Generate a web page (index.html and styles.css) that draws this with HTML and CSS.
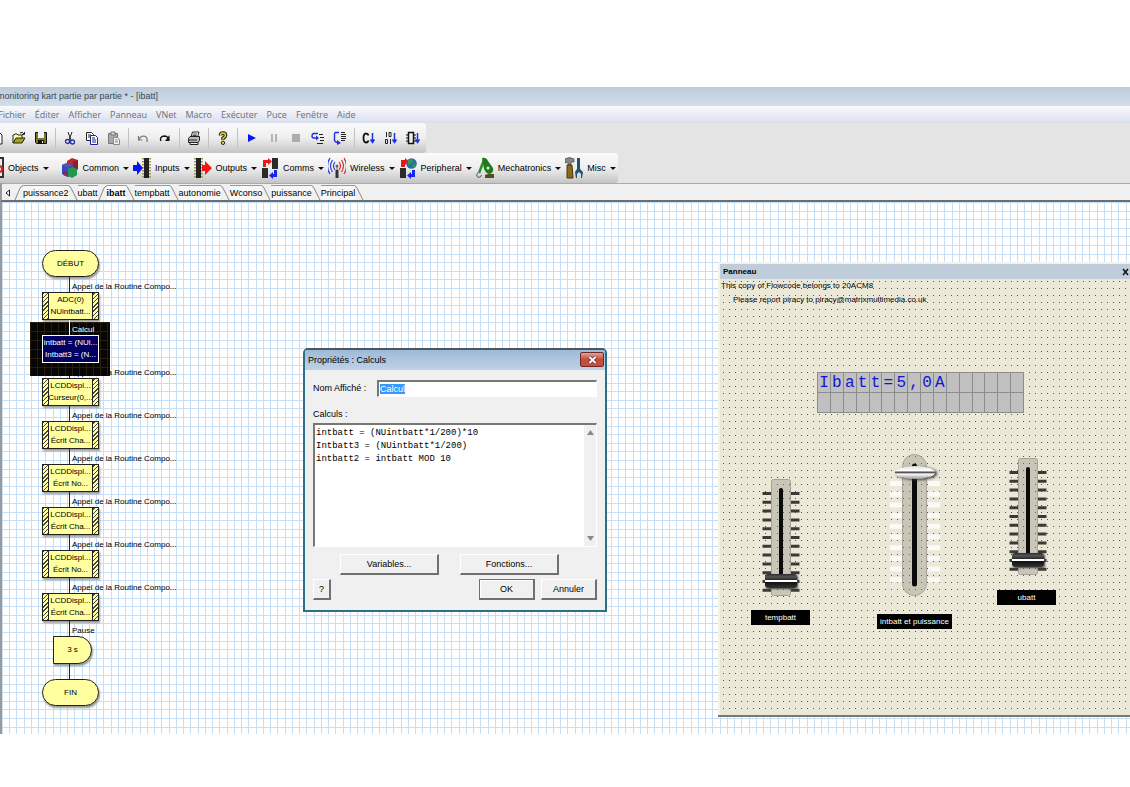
FILE: index.html
```
<!DOCTYPE html>
<html lang="fr">

<head>
    <meta charset="UTF-8">
    <meta name="viewport" content="width=device-width, initial-scale=1.0">
    <title>monitoring kart partie par partie * - [ibatt]</title>
    <link rel="stylesheet" href="styles.css">
</head>

<body>
    <header class="title-bar">monitoring kart partie par partie * - [ibatt]</header>

    <nav class="menu-bar">
        <button>Fichier</button>
        <button>Éditer</button>
        <button>Afficher</button>
        <button>Panneau</button>
        <button>VNet</button>
        <button>Macro</button>
        <button>Exécuter</button>
        <button>Puce</button>
        <button>Fenêtre</button>
        <button>Aide</button>
    </nav>

    <div class="toolbars">
        <div class="toolbar">
            <button aria-label="Nouveau"><svg width="14" height="14" viewBox="0 0 14 14"><path d="M3 1h6l3 3v9H3z" fill="#fff" stroke="#222"/></svg></button>
            <button aria-label="Ouvrir"><svg width="14" height="14" viewBox="0 0 14 14"><path d="M1 12V4h1l1-1h2l1 1h4v3" fill="#ffffa0" stroke="#222"/><path d="M1 12l3-5h9l-3 5z" fill="#a5a51c" stroke="#222"/><path d="M8 2q2-2 4 1M12.500 1v2.500H10" fill="none" stroke="#222"/></svg></button>
            <button aria-label="Enregistrer"><svg width="14" height="14" viewBox="0 0 14 14"><path d="M1.500 1.500h11v11h-10l-1-1z" fill="#77772a" stroke="#111"/><path d="M4 1h6v6H4z" fill="#f4f4f4"/><path d="M4 9h6v4H4z" fill="#111"/><path d="M8 10h1v2H8z" fill="#fff"/></svg></button>
            <span class="sep"></span>
            <button aria-label="Couper"><svg width="14" height="14" viewBox="0 0 14 14"><path d="M5 1l3 8M9 1L6 9" stroke="#222" fill="none"/><circle cx="4.500" cy="10.500" r="2" fill="none" stroke="#2430a8" stroke-width="1.300"/><circle cx="9.500" cy="11" r="2" fill="none" stroke="#2430a8" stroke-width="1.300"/></svg></button>
            <button aria-label="Copier"><svg width="14" height="14" viewBox="0 0 14 14"><path d="M1.500 1.500h5l2 2v6h-7z" fill="#fff" stroke="#222"/><path d="M3 4h3M3 6h4" stroke="#222"/><path d="M5.500 4.500h5l2 2v7h-7z" fill="#fff" stroke="#1c2590"/><path d="M7 7h3M7 9h4M7 11h4" stroke="#1c2590"/></svg></button>
            <button aria-label="Coller"><svg width="14" height="14" viewBox="0 0 14 14"><path d="M1.500 2.500h9v10h-9z" fill="#a8a8a8" stroke="#777"/><path d="M4 1h4v3H4z" fill="#ddd" stroke="#777"/><path d="M6.500 6.500h4l2 2v5h-6z" fill="#f4f4f4" stroke="#888"/><path d="M8 9h3M8 11h3" stroke="#888"/></svg></button>
            <span class="sep"></span>
            <button aria-label="Annuler"><svg width="12" height="14" viewBox="0 0 12 14"><path d="M1.500 5v4h4M2 9q1-4 5-4q4 1 3 6" fill="none" stroke="#777" stroke-width="1.200"/></svg></button>
            <button aria-label="Rétablir"><svg width="12" height="14" viewBox="0 0 12 14"><path d="M2 10q-2-4 3-5q4 0 5 4" fill="none" stroke="#111" stroke-width="1.400"/><path d="M10.500 4v6H6z" fill="#111"/></svg></button>
            <span class="sep"></span>
            <button aria-label="Imprimer"><svg width="14" height="14" viewBox="0 0 14 14"><path d="M4 6l1.500-5H12l-1.500 5" fill="#fff" stroke="#222"/><path d="M6 3h4M5.500 4.500h4" stroke="#444"/><path d="M1.500 7.500l1.500-2h9.500v4l-1.500 2h-9.500z" fill="#bbb" stroke="#222"/><path d="M3 11.500h8v2H3zM2 9h8" fill="#eee" stroke="#222"/></svg></button>
            <span class="sep"></span>
            <button aria-label="Aide"><svg width="10" height="14" viewBox="0 0 10 14"><path d="M2.500 4.500q0-2.500 2.500-2.500t2.500 2.300q0 1.500-2.500 3v1.500" fill="none" stroke="#222" stroke-width="3.600"/><path d="M2.500 4.500q0-2.500 2.500-2.500t2.500 2.300q0 1.500-2.500 3v1" fill="none" stroke="#e6dc28" stroke-width="1.500"/><circle cx="5" cy="11.800" r="1.700" fill="#e6dc28" stroke="#222"/></svg></button>
            <span class="sep"></span>
            <button aria-label="Exécuter"><svg width="10" height="12" viewBox="0 0 10 12"><path d="M1 2l8 4-8 4z" fill="#0a18f0"/></svg></button>
            <button aria-label="Pause"><svg width="8" height="12" viewBox="0 0 8 12"><path d="M1 2h2v8H1zM5 2h2v8H5z" fill="#b4b4b4"/></svg></button>
            <button aria-label="Stop"><svg width="8" height="12" viewBox="0 0 8 12"><path d="M0 2h8v8H0z" fill="#acacac"/></svg></button>
            <button aria-label="Pas à pas entrant"><svg width="14" height="14" viewBox="0 0 14 14"><path d="M7 2.500H2.500Q1 3 1 5t2 2h2" fill="none" stroke="#2030e0" stroke-width="1.400"/><path d="M5 4.500L8 7 5 9.500z" fill="#2030e0"/><path d="M8 3.500h4M9 6.500h4M9 9.500h4M6 12.500h6" stroke="#222"/></svg></button>
            <button aria-label="Pas à pas principal"><svg width="14" height="14" viewBox="0 0 14 14"><path d="M6 1.500H2.500Q1.500 2 1.500 3v6q0 2 3 2.500" fill="none" stroke="#2030e0" stroke-width="1.400"/><path d="M4 9l4 3-4 2z" fill="#2030e0"/><path d="M8 1.500h4M8 3.500h5M8 5.500h5M8 7.500h5M8 9.500h4" stroke="#222"/></svg></button>
            <span class="sep"></span>
            <button aria-label="Compiler en C"><svg width="14" height="14" viewBox="0 0 14 14"><path d="M6.500 4.500Q6 2.500 4 2.500 1.500 2.500 1.500 7T4 11.500q2 0 2.500-2" fill="none" stroke="#111" stroke-width="1.800"/><path d="M10.500 2v9M8.500 8.500l2 3 2-3" fill="none" stroke="#2030e0" stroke-width="1.500"/></svg></button>
            <button aria-label="Compiler en hexadécimal"><svg width="14" height="14" viewBox="0 0 14 14"><path d="M2.500 1v5M6.500 8v5M1.500 8.500h2v4h-2zM5 1.500h2v4H5z" fill="none" stroke="#222"/><path d="M10.500 2v9M8.500 8.500l2 3 2-3" fill="none" stroke="#2030e0" stroke-width="1.500"/></svg></button>
            <button aria-label="Compiler vers la puce"><svg width="14" height="14" viewBox="0 0 14 14"><path d="M2.500 1.500h5v11h-5z" fill="#eee" stroke="#111" stroke-width="1.500"/><path d="M0 4h2M0 7h2M0 10h2M8 4h2M8 7h2M8 10h2" stroke="#111"/><path d="M11.500 2v9M9.500 8.500l2 3 2-3" fill="none" stroke="#2030e0" stroke-width="1.500"/></svg></button>
        </div>

        <div class="toolbar components">
            <button><svg width="18" height="22" viewBox="0 0 18 22"><path d="M1 1h16v19H1z" fill="#eee" stroke="#333" stroke-width="2"/><circle cx="13" cy="12" r="3" fill="none" stroke="#d22" stroke-width="2"/></svg><span>Objects</span></button>
            <button><svg width="18" height="22" viewBox="0 0 18 22"><path d="M6 4l5-3 6 2v9l-5 3-6-2z" fill="#b52d2d"/><path d="M12 5l5-2v9l-5 3z" fill="#8c1f28"/><path d="M1 8l5-2 6 2v9l-5 3-6-3z" fill="#2e4fc4"/><path d="M1 8l5-2 6 2-5 3z" fill="#5b4fb0"/><path d="M7 12l5-2 4 2v6l-5 3-4-2z" fill="#1f9a4a"/><path d="M2 13l5 2v5l-5-2z" fill="#7a2d6a"/></svg><span>Common</span></button>
            <button><svg width="18" height="22" viewBox="0 0 18 22"><path d="M10 1v20M17 1v20" fill="none" stroke="#a89a4a" stroke-width="2" stroke-dasharray="1.500 1.500"/><path d="M11 1h5v20h-5z" fill="#222"/><path d="M0 8h4V4l6 7-6 7v-4H0z" fill="#0c14f5"/></svg><span>Inputs</span></button>
            <button><svg width="18" height="22" viewBox="0 0 18 22"><path d="M1 1v20M8 1v20" fill="none" stroke="#a89a4a" stroke-width="2" stroke-dasharray="1.500 1.500"/><path d="M2 1h5v20H2z" fill="#222"/><path d="M8 8h3V4l7 7-7 7v-4H8z" fill="#f81414"/></svg><span>Outputs</span></button>
            <button><svg width="18" height="22" viewBox="0 0 18 22"><path d="M11 1h6v11h-6zM1 11h6v10H1z" fill="#2b2b2b"/><path d="M2 10V3h5V1l4 3.500L7 8V6H5v4z" fill="#f11414"/><path d="M16 13v7h-4v2l-4-3.500L12 15v2h1v-4z" fill="#1428e8"/></svg><span>Comms</span></button>
            <button><svg width="18" height="22" viewBox="1 0 18 22"><g fill="none" stroke="#2a3fd0" stroke-width="1.200"><path d="M8 5q-3 4 0 8M5.500 3q-4 6 0 12M3 1q-5 8 0 16"/></g><g fill="none" stroke="#e02828" stroke-width="1.200"><path d="M12 5q3 4 0 8M14.500 3q4 6 0 12M17 1q5 8 0 16"/></g><circle cx="10" cy="9" r="1.500" fill="#666"/><path d="M9.500 9h1v6h-1z" fill="#666"/><path d="M8.500 13h3v8h-3z" fill="#333"/></svg><span>Wireless</span></button>
            <button><svg width="18" height="22" viewBox="0 0 18 22"><path d="M1 11h6v10H1z" fill="#2b2b2b"/><path d="M2 10V3h4V1l4 3.500L6 8v2z" fill="#f11414"/><circle cx="12.500" cy="6.500" r="5.300" fill="#2c6ab0"/><path d="M9 3l4-1 1 3-3 2-2 1zM13 8l4-2-1 4-2 1z" fill="#2f9a50"/><path d="M16 13v7h-4v2l-4-3.500L12 15v2h1v-4z" fill="#1428e8"/></svg><span>Peripheral</span></button>
            <button><svg width="18" height="22" viewBox="0 0 18 22"><path d="M3 16L8 3" stroke="#2b8c2b" stroke-width="2.500"/><path d="M6 1q4-1 6 3l5 7q1 4-3 6-4 0-6-5z" fill="#1d7c1d"/><circle cx="12" cy="11" r="1.500" fill="#d8efd8"/><circle cx="3" cy="18" r="2.300" fill="none" stroke="#555" stroke-dasharray="9 4"/><path d="M9 21v-3l3-1h6v4z" fill="#5a4a20"/></svg><span>Mechatronics</span></button>
            <button><svg width="18" height="22" viewBox="0 0 18 22"><path d="M0 2q4-3 9 0v3H6v3H3V5L0 6z" fill="#8a8a8a" stroke="#444" stroke-width=".7"/><path d="M2 8h5l1 13H2z" fill="#8a6a1c" stroke="#4a3808"/><path d="M12 1h3v11l3 3-1 6h-1v-4l-2-2-2 2v4h-1l-1-6 2-3z" fill="#1d5572"/></svg><span>Misc</span></button>
        </div>
    </div>

    <nav class="tabs">
        <button class="tab-scroll" aria-label="Précédent"><svg width="5" height="8" viewBox="0 0 5 8"><path d="M4.500 1L1 4l3.500 3z" fill="#fff" stroke="#222"/></svg></button>
        <svg class="edge" width="9" height="15" viewBox="0 0 9 15"><path d="M1 15L6 3q1-2 3-2" /></svg>
        <button>puissance2</button>
        <svg class="edge" width="9" height="15" viewBox="0 0 9 15"><path d="M0 1q1 0 2 2l6 12" /></svg>
        <button>ubatt</button>
        <svg class="edge" width="9" height="15" viewBox="0 0 9 15"><path d="M1 15L6 3q1-2 3-2" /></svg>
        <button class="active">ibatt</button>
        <svg class="edge" width="9" height="15" viewBox="0 0 9 15"><path d="M0 1q1 0 2 2l6 12" /></svg>
        <button>tempbatt</button>
        <svg class="edge" width="9" height="15" viewBox="0 0 9 15"><path d="M0 1q1 0 2 2l6 12" /></svg>
        <button>autonomie</button>
        <svg class="edge" width="9" height="15" viewBox="0 0 9 15"><path d="M0 1q1 0 2 2l6 12" /></svg>
        <button>Wconso</button>
        <svg class="edge" width="9" height="15" viewBox="0 0 9 15"><path d="M0 1q1 0 2 2l6 12" /></svg>
        <button>puissance</button>
        <svg class="edge" width="9" height="15" viewBox="0 0 9 15"><path d="M0 1q1 0 2 2l6 12" /></svg>
        <button>Principal</button>
        <svg class="edge" width="9" height="15" viewBox="0 0 9 15"><path d="M0 1q1 0 2 2l6 12" /></svg>
    </nav>

    <main class="workspace">
        <div class="flowchart">
            <div class="terminal">DÉBUT</div>
            <div class="step-label">Appel de la Routine Compo...</div>
            <div class="call"><span>ADC(0)</span><span>NUintbatt...</span></div>
            <div class="selected">
                <div class="step-label">Calcul</div>
                <div class="calc"><span>intbatt = (NUi...</span><span>Intbatt3 = (N...</span></div>
            </div>
            <div class="step-label">Appel de la Routine Compo...</div>
            <div class="call"><span>LCDDispl...</span><span>Curseur(0,...</span></div>
            <div class="step-label">Appel de la Routine Compo...</div>
            <div class="call"><span>LCDDispl...</span><span>Écrit Cha...</span></div>
            <div class="step-label">Appel de la Routine Compo...</div>
            <div class="call"><span>LCDDispl...</span><span>Écrit No...</span></div>
            <div class="step-label">Appel de la Routine Compo...</div>
            <div class="call"><span>LCDDispl...</span><span>Écrit Cha...</span></div>
            <div class="step-label">Appel de la Routine Compo...</div>
            <div class="call"><span>LCDDispl...</span><span>Écrit No...</span></div>
            <div class="step-label">Appel de la Routine Compo...</div>
            <div class="call"><span>LCDDispl...</span><span>Écrit Cha...</span></div>
            <div class="step-label">Pause</div>
            <div class="pause">3 s</div>
            <div class="step-label"></div>
            <div class="terminal">FIN</div>
        </div>

        <form class="dialog" id="calcForm">
            <div class="dialog-title">
                <h1>Propriétés : Calculs</h1>
                <button type="button" class="close" aria-label="Fermer"><svg width="9" height="8" viewBox="0 0 9 8"><path d="M1.500 1l6 6M7.500 1l-6 6" stroke="#5a2a2a" stroke-width="3.400"/><path d="M1.500 1l6 6M7.500 1l-6 6" stroke="#fff" stroke-width="2"/></svg></button>
            </div>
            <div class="dialog-body">
                <div class="name-row">
                    <label for="displayName">Nom Affiché :</label>
                    <input type="text" id="displayName" name="displayName" value="Calcul">
                </div>
                <label for="calculs">Calculs :</label>
                <div class="code-box">
                    <textarea id="calculs" name="calculs" spellcheck="false">intbatt = (NUintbatt*1/200)*10
Intbatt3 = (NUintbatt*1/200)
intbatt2 = intbatt MOD 10</textarea>
                    <div class="scrollbar">
                        <svg width="7" height="5" viewBox="0 0 7 5"><path d="M0 5l3.500-5L7 5z" fill="#8a8a8a"/></svg>
                        <svg width="7" height="5" viewBox="0 0 7 5"><path d="M0 0h7L3.500 5z" fill="#8a8a8a"/></svg>
                    </div>
                </div>
                <div class="insert-row">
                    <button type="button">Variables...</button>
                    <button type="button">Fonctions...</button>
                </div>
                <div class="action-row">
                    <button type="button" class="help">?</button>
                    <button type="submit" class="ok">OK</button>
                    <button type="button">Annuler</button>
                </div>
            </div>
        </form>

        <section class="panel">
            <div class="panel-title">
                <h2>Panneau</h2>
                <button aria-label="Fermer le panneau"><svg width="7" height="8" viewBox="0 0 7 8"><path d="M1 1l5 6M6 1L1 7" stroke="#111" stroke-width="1.500"/></svg></button>
            </div>
            <div class="panel-canvas">
                <p>This copy of Flowcode belongs to 20ACM8</p>
                <p class="indent">Please report piracy to piracy@matrixmultimedia.co.uk</p>

                <div class="lcd" id="lcd"></div>

                <div class="slider temp">
                    <svg width="38" height="117" viewBox="0 0 38 117">
                        <path d="M5 13v100M33 13v100" stroke="#3c3a36" stroke-width="9" stroke-dasharray="3 5.800"/>
                        <rect x="9.500" y=".5" width="19" height="116" rx="2" fill="#8a887e" fill-opacity=".35" stroke="#a3a198"/>
                        <path d="M19 11v92" stroke="#0a0a0a" stroke-width="4" stroke-linecap="round"/>
                    </svg>
                    <input type="range" id="tempbatt" min="0" max="100" value="0">
                </div>
                <label class="tag temp-tag" for="tempbatt">tempbatt</label>

                <div class="slider current">
                    <svg width="50" height="142" viewBox="0 0 50 142">
                        <path d="M6 27v104M44 27v104" stroke="#fafaf8" stroke-width="12" stroke-dasharray="5 5.700"/>
                        <rect x="12.500" y=".5" width="24" height="141" rx="12" fill="#8a887e" fill-opacity=".35" stroke="#a8a69c"/>
                        <path d="M24.500 12v118" stroke="#0a0a0a" stroke-width="5" stroke-linecap="round"/>
                    </svg>
                    <input type="range" id="intbatt" min="0" max="100" value="100">
                </div>
                <label class="tag current-tag" for="intbatt">intbatt et puissance</label>

                <div class="slider voltage">
                    <svg width="38" height="117" viewBox="0 0 38 117">
                        <path d="M5 13v100M33 13v100" stroke="#3c3a36" stroke-width="9" stroke-dasharray="3 5.800"/>
                        <rect x="9.500" y=".5" width="19" height="116" rx="2" fill="#8a887e" fill-opacity=".35" stroke="#a3a198"/>
                        <path d="M19 11v92" stroke="#0a0a0a" stroke-width="4" stroke-linecap="round"/>
                    </svg>
                    <input type="range" id="ubatt" min="0" max="100" value="0">
                </div>
                <label class="tag voltage-tag" for="ubatt">ubatt</label>
            </div>
        </section>
    </main>

    <script>
        const lcd = document.getElementById('lcd');
        const text = 'Ibatt=5,0A'.padEnd(32);

        // 2 lines of 16 characters
        for (const char of text) {
            const cell = document.createElement('span');
            cell.textContent = char;
            lcd.appendChild(cell);
        }

        document.getElementById('calcForm').addEventListener('submit', function (event) {
            event.preventDefault();
        });

        document.getElementById('displayName').select();
    </script>
</body>

</html>
```
FILE: styles.css
```
* {
    box-sizing: border-box;
}

body {
    margin: 0;
    padding: 87px 0 53px;
    min-height: 100vh;
    display: flex;
    flex-direction: column;
    overflow: hidden;
    background-color: white;
    color: black;
    font-family: "Liberation Sans", Arial, sans-serif;
    font-size: 9px;
}

button,
input,
textarea {
    font: inherit;
    color: inherit;
    margin: 0;
    padding: 0;
    border: none;
    background: none;
}

h1,
h2,
p {
    margin: 0;
    font-size: inherit;
    font-weight: normal;
}

svg {
    display: block;
    flex: none;
}

.title-bar {
    height: 19px;
    line-height: 19px;
    text-indent: -3px;
    white-space: nowrap;
    color: #3c4652;
    background: linear-gradient(#bccbdb, #d3deea);
}

.menu-bar {
    display: flex;
    gap: 9px;
    height: 17px;
    padding-bottom: 1px;
    margin-left: -2px;
    color: #6c6e74;
    font-family: "Open Sans", sans-serif;
    background: linear-gradient(#fafbfd, #d9deef);
}

/* Toolbars */
.toolbars {
    display: flex;
    flex-direction: column;
    align-items: flex-start;
    background-color: #e4e4e4;
}

.toolbar {
    display: flex;
    align-items: center;
    height: 30px;
    margin-left: -14px;
    padding-right: 2px;
    border-radius: 0 3px 3px 0;
    background: linear-gradient(#fbfbfb, #eee 50%, #c4c4c4);
}

.toolbar button {
    display: flex;
    justify-content: center;
    align-items: center;
    width: 22px;
    height: 22px;
}

.sep {
    width: 1px;
    height: 20px;
    margin: 0 3px;
    background-color: #c2c2c2;
}

.components {
    padding-right: 0;
}

.components button {
    width: auto;
    gap: 4px;
    padding-right: 4px;
}

.components button::after {
    content: "";
    border: 3px solid transparent;
    border-top-color: #111;
    border-bottom: none;
}

.components button:first-child {
    padding-right: 12px;
}

.components button:last-child {
    padding-right: 2px;
}

/* Tabs */
.tabs {
    display: flex;
    align-items: flex-end;
    height: 19px;
    border-top: 1px solid #aaa;
    border-bottom: 2px solid #6e6e6e;
    border-left: 2px solid #999;
    background-color: #f0f0f0;
}

.tabs button {
    height: 15px;
    border-top: 1px solid #999;
    background-color: #f7f7f7;
}

.tabs .tab-scroll {
    width: 12px;
    padding-left: 3px;
    border: none;
    background: none;
}

.tabs .active {
    font-weight: bold;
    background-color: white;
}

.edge path {
    fill: none;
    stroke: #888;
}

.workspace {
    position: relative;
    flex: 1;
    border-left: 2px solid #999;
    background-color: white;
    background-image:
        linear-gradient(90deg, #c4dff6 1px, transparent 1px 7px, #c4dff6 7px 8px, transparent 8px 14px, #c4dff6 14px 15px, transparent 15px 22px, #c4dff6 22px 23px, transparent 23px),
        linear-gradient(#c4dff6 1px, transparent 1px 9px, #c4dff6 9px 10px, transparent 10px 17px, #c4dff6 17px 18px, transparent 18px 26px, #c4dff6 26px 27px, transparent 27px 34px, #c4dff6 34px 35px, transparent 35px);
    background-size: 29px 100%, 100% 43px;
}

.flowchart {
    width: 57px;
    margin: 48px 0 0 40px;
    font-size: 8px;
    line-height: 12px;
    white-space: nowrap;
}

.terminal {
    height: 27px;
    line-height: 25px;
    text-align: center;
    border: 1px solid #222;
    border-radius: 14px;
    background-color: #ffffa0;
    box-shadow: 1px 2px 2px #999;
}

.step-label {
    height: 15px;
    margin-left: 27px;
    padding: 4px 0 0 2px;
    border-left: 1px solid #222;
}

.call,
.calc {
    display: flex;
    flex-direction: column;
    align-items: center;
    height: 28px;
    padding: 1px 0;
    border: 1px solid #222;
}

.call {
    background:
        linear-gradient(#ffffa0, #ffffa0) center / 43px 100% no-repeat,
        linear-gradient(#222, #222) center / 45px 100% no-repeat,
        repeating-linear-gradient(135deg, #444 0 1px, #ffffa0 1px 3px);
    box-shadow: 1px 2px 2px #999;
}

.selected {
    position: relative;
    color: white;
}

.selected::before {
    content: "";
    position: absolute;
    inset: 2px -11px -13px -12px;
    background-color: #060604;
    background-image:
        linear-gradient(90deg, #2a1c08 1px, transparent 1px),
        linear-gradient(#2a1c08 1px, transparent 1px);
    background-size: 7px 9px;
}

.selected .step-label,
.calc {
    position: relative;
    border-color: white;
}

.calc {
    background-color: #000064;
}

.pause {
    width: 39px;
    height: 28px;
    margin-left: 11px;
    line-height: 26px;
    text-align: center;
    border: 1px solid #222;
    border-radius: 0 14px 14px 0;
    background-color: #ffffa0;
    box-shadow: 1px 2px 2px #999;
}

/* Calculation dialog */
.dialog {
    position: absolute;
    top: 146px;
    left: 301px;
    width: 304px;
    border: 2px solid #2e6f86;
    border-top-color: #4a5664;
    border-radius: 5px 5px 0 0;
    background-color: #f0f0f0;
}

.dialog-title {
    display: flex;
    justify-content: space-between;
    align-items: flex-start;
    height: 20px;
    padding: 2px 1px 0 3px;
    line-height: 16px;
    background: linear-gradient(#9fbad6, #bed2e8);
    border-radius: 3px 3px 0 0;
}

.close {
    display: flex;
    justify-content: center;
    align-items: center;
    width: 24px;
    height: 15px;
    border: 1px solid #6d2a28;
    border-radius: 2px;
    background: linear-gradient(#e2a198, #c94b3c 50%, #c2503c);
}

.dialog-body {
    display: flex;
    flex-direction: column;
    padding: 10px 8px 10px;
}

.dialog-body label {
    height: 17px;
    line-height: 16px;
}

.name-row {
    display: flex;
    margin-bottom: 9px;
}

.name-row label {
    width: 64px;
}

.name-row input {
    flex: 1;
    min-width: 0;
    height: 17px;
    padding: 0 1px;
    border: 1px solid #fff;
    border-top: 2px solid #777;
    border-left: 2px solid #777;
    background-color: white;
    outline: none;
}

.name-row input::selection {
    color: white;
    background-color: #3399ff;
}

.code-box {
    display: flex;
    height: 124px;
    border: 1px solid #fff;
    border-top: 2px solid #777;
    border-left: 2px solid #777;
    background-color: white;
}

.code-box textarea {
    flex: 1;
    padding: 2px 1px;
    resize: none;
    outline: none;
    overflow: hidden;
    font-family: "Liberation Mono", monospace;
    font-size: 9px;
    line-height: 13px;
}

.scrollbar {
    display: flex;
    flex-direction: column;
    justify-content: space-between;
    align-items: center;
    width: 12px;
    padding: 5px 0;
    background-color: #f0f0f0;
}

.dialog-body button {
    width: 56px;
    height: 21px;
    border: 1px solid #fff;
    border-right: 2px solid #707070;
    border-bottom: 2px solid #707070;
    background-color: #f0f0f0;
}

.insert-row {
    display: flex;
    gap: 21px;
    padding: 7px 27px 4px;
}

.insert-row button {
    width: 99px;
}

.action-row {
    display: flex;
    gap: 6px;
}

.action-row .help {
    width: 18px;
    margin-right: auto;
}

.action-row .ok {
    border: 2px solid #707070;
    border-top-width: 1px;
    border-left-width: 1px;
    box-shadow: inset 1px 1px #fff;
}

/* Component panel */
.panel {
    position: absolute;
    top: 60px;
    right: 0;
    bottom: 17px;
    left: 716px;
    display: flex;
    flex-direction: column;
    padding: 2px 0 0 2px;
    border-bottom: 2px solid #777;
    background-color: #f4f2ea;
    font-size: 8px;
}

.panel-title {
    display: flex;
    justify-content: space-between;
    align-items: center;
    height: 15px;
    padding: 0 1px 0 3px;
    background-color: #bfcddb;
}

.panel-title h2 {
    font-weight: bold;
}

.panel-canvas {
    position: relative;
    flex: 1;
    line-height: 14px;
    white-space: nowrap;
    background: conic-gradient(from 270deg at 1px 1px, #55534a 0 90deg, transparent 0) 3px 2px / 6px 7px #ebe8d8;
}

.panel-canvas p {
    padding-left: 1px;
}

.panel-canvas .indent {
    padding-left: 13px;
}

.lcd {
    position: absolute;
    top: 93px;
    left: 97px;
    display: grid;
    grid-template-columns: repeat(16, 1fr);
    grid-auto-rows: 19px;
    gap: 1px;
    width: 207px;
    padding: 1px;
    background-color: #8c8c8c;
    color: #1414d2;
    font-family: "Liberation Mono", monospace;
    font-size: 16px;
    line-height: 20px;
    text-align: center;
}

.lcd span {
    background-color: #c0c0c0;
}

.slider {
    position: absolute;
}

.slider input {
    position: absolute;
    inset: 0;
    width: 100%;
    height: 100%;
    appearance: none;
    writing-mode: vertical-lr;
    direction: rtl;
}

.slider input::-webkit-slider-thumb {
    appearance: none;
    width: 32px;
    height: 14px;
    border-radius: 3px;
    background: linear-gradient(#2c2c2c, #555 20%, #222 45%, #fff 45% 58%, #111 58%, #333);
    box-shadow: 1px 1px 2px #444;
}

.temp {
    top: 200px;
    left: 42px;
}

.voltage {
    top: 179px;
    left: 289px;
}

.slider.temp input,
.slider.voltage input {
    padding-bottom: 8px;
}

.current {
    top: 175px;
    left: 170px;
}

.slider.current input {
    padding-top: 12px;
}

.slider.current input::-webkit-slider-thumb {
    width: 40px;
    height: 13px;
    border-radius: 50%;
    background: linear-gradient(#ddd, #fff 35%, #555 48% 54%, #fff 60%, #999);
    box-shadow: 2px 1px 3px #333;
}

.tag {
    position: absolute;
    width: 59px;
    height: 15px;
    line-height: 15px;
    text-align: center;
    color: white;
    background-color: black;
}

.temp-tag {
    top: 331px;
    left: 31px;
}

.current-tag {
    top: 335px;
    left: 157px;
    width: 75px;
}

.voltage-tag {
    top: 311px;
    left: 277px;
}
```
